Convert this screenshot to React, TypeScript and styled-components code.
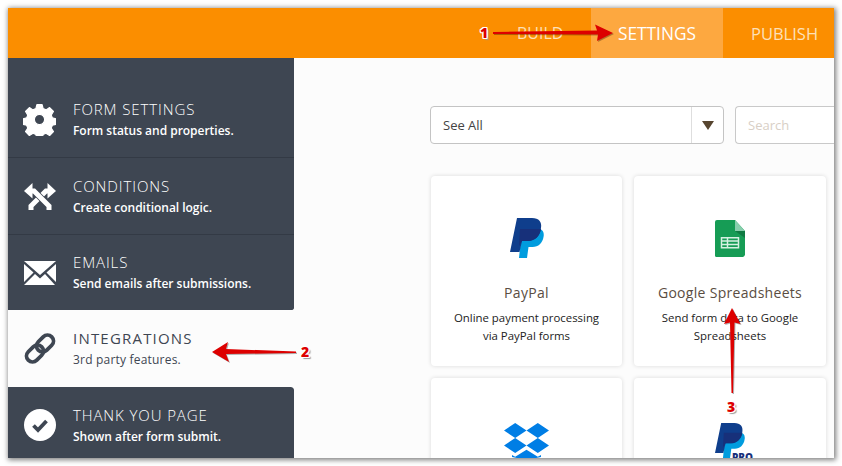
import React from "react";
import styled, { createGlobalStyle } from "styled-components";

const GlobalStyle = createGlobalStyle`
  html, body { margin: 0; padding: 0; background: #fff; }
  body { font-family: "Open Sans", "Liberation Sans", sans-serif; overflow: hidden; }
`;

const menuItems = [
  { key: "settings", title: "FORM SETTINGS", sub: "Form status and properties.", icon: "gear", height: 76 },
  { key: "conditions", title: "CONDITIONS", sub: "Create conditional logic.", icon: "cross", height: 77 },
  { key: "emails", title: "EMAILS", sub: "Send emails after submissions.", icon: "mail", height: 76, rounded: "bottom" },
  { key: "integrations", title: "INTEGRATIONS", sub: "3rd party features.", icon: "link", height: 76, active: true },
  { key: "thanks", title: "THANK YOU PAGE", sub: "Shown after form submit.", icon: "check", height: 77, rounded: "top" },
];

const MenuIcon = ({ name }: { name: string }) => {
  if (name === "gear")
    return (
      <svg width="33" height="33" viewBox="0 0 32 32">
        <path
          fill="#fff"
          stroke="#fff"
          strokeWidth="1.200"
          strokeLinejoin="round"
          fillRule="evenodd"
          d="M13.500 1.500h5l1 4 2.800 1.200 3.500-2.200 3.700 3.700-2.200 3.500 1.200 2.800 4 1v5l-4 1-1.200 2.800 2.200 3.500-3.700 3.700-3.500-2.200-2.800 1.200-1 4h-5l-1-4-2.800-1.200-3.500 2.200-3.700-3.700 2.200-3.500-1.200-2.800-4-1v-5l4-1 1.200-2.800-2.200-3.500 3.700-3.700 3.500 2.200 2.800-1.200zM16 11a5 5 0 1 0 0 10 5 5 0 0 0 0-10z"
        />
      </svg>
    );
  if (name === "cross")
    return (
      <svg width="32" height="27" viewBox="0 0 32 27">
        <path d="M24 8h-2L7 23v4" fill="none" stroke="#fff" strokeWidth="5" />
        <path d="M8 8h2l15 15v4" fill="none" stroke="#3e4652" strokeWidth="6.600" />
        <path d="M8 8h2l15 15v4" fill="none" stroke="#fff" strokeWidth="5" />
        <path fill="#fff" d="M0 8l8.500-8v15.500z M32 8l-8.500-8v15.500z" />
      </svg>
    );
  if (name === "mail")
    return (
      <svg width="32" height="24" viewBox="0 0 32 24">
        <path fill="#fff" d="M0 0h32L16 14z M0 3l9.500 8.500L0 21z M32 3v18l-9.500-9.500z M11 13l5 4.500 5-4.500 10 11H0z" />
      </svg>
    );
  if (name === "link")
    return (
      <svg width="32" height="33" viewBox="0 0 32 33" fill="none" stroke="#3e4652" strokeWidth="3.800">
        <rect x="15" y="2" width="12" height="19" rx="6" transform="rotate(45 21 11.500)" />
        <rect x="5" y="12" width="12" height="19" rx="6" transform="rotate(45 11 21.500)" />
      </svg>
    );
  return (
    <svg width="32" height="32" viewBox="0 0 32 32">
      <circle cx="16" cy="16" r="16" fill="#fff" />
      <path d="M9.500 16.500l4.500 4.500 8.500-9" fill="none" stroke="#3e4652" strokeWidth="3.800" />
    </svg>
  );
};

const PayPalMark = ({ size }: { size: number }) => (
  <svg width={size} height={size * 1.18} viewBox="0 0 34 40">
    <path fill="#009cde" d="M12 11h16c4.500 0 6.500 3 5.500 8-1 6-5 10-11 10h-4l-1.500 11H9z" />
    <path fill="#0f3e8c" d="M7 0h15c7 0 10 4 9 10-1 8-6 13-13 13h-6l-2.500 11H0z" />
    <path fill="#17307a" d="M10 11h21c-1 7-6 12-13 12h-6l-3 5z" />
  </svg>
);

const Sheets = () => (
  <svg width="30" height="37" viewBox="0 0 30 37">
    <path fill="#169c55" d="M2 0h18l10 11v23a3 3 0 0 1-2 3H2a2 2 0 0 1-2-3V2a2 2 0 0 1 2-2z" />
    <path fill="#87ceac" d="M20 0l10 11H20z" />
    <path fill="#0f7a42" d="M20 11h10v7z" />
    <path fill="none" stroke="#d6f0e2" strokeWidth="1.500" d="M6.500 17.700h17v10h-17z M6.500 21h17 M6.500 24.500h17 M12.500 17.700v10" />
  </svg>
);

const Dropbox = () => (
  <svg width="45" height="37" viewBox="0 0 45 37">
    <path
      fill="#007ee5"
      d="M11.200 0l11.300 7.500-11.300 7.500L0 7.500zM33.800 0L45 7.500 33.800 15l-11.300-7.500zM0 22.500L11.200 15l11.300 7.500L11.200 30zM33.800 15L45 22.500 33.800 30l-11.300-7.500zM8 32l3.200 1.800 11.300-7 11.300 7 3.200-1.800v2L22.500 37 8 34z"
    />
  </svg>
);

const ArrowOne = () => (
  <Overlay $left={492} $top={24} $width={122} $height={18}>
    <svg width="122" height="18" viewBox="0 0 122 18">
      <path fill="#dd0000" d="M1 8l104-1.500-2-6L121 9l-16 8 1-6.500L1 10z" />
    </svg>
  </Overlay>
);

const ArrowTwo = () => (
  <Overlay $left={211} $top={341} $width={86} $height={22}>
    <svg width="86" height="22" viewBox="0 0 86 22">
      <path fill="#dd0000" d="M1 11L17 1l-2 7 70 2.500V12l-70 1 3 8z" />
    </svg>
  </Overlay>
);

const ArrowThree = () => (
  <Overlay $left={723} $top={307} $width={18} $height={87}>
    <svg width="18" height="87" viewBox="0 0 18 87">
      <path fill="#dd0000" d="M9 1l8.500 16-6-1.500L10 86H8.500L7 15.500 1 17z" />
    </svg>
  </Overlay>
);

export default function App() {
  return (
    <Page>
      <GlobalStyle />
      <Frame>
        <TopBar>
          <Tab $size={16} $width={74}>BUILD</Tab>
          <Tab $size={17.3} $width={132} $active>SETTINGS</Tab>
          <Tab $size={16.5} $width={111} $inset={28}>PUBLISH</Tab>
        </TopBar>
        <Body>
          <Sidebar>
            <SideGap />
            {menuItems.map((item) => (
              <MenuRow key={item.key} $active={item.active} $height={item.height} $rounded={item.rounded}>
                <IconSlot>
                  <MenuIcon name={item.icon} />
                </IconSlot>
                <div>
                  <MenuTitle $active={item.active}>{item.title}</MenuTitle>
                  <MenuSub $active={item.active}>{item.sub}</MenuSub>
                </div>
              </MenuRow>
            ))}
          </Sidebar>
          <Content>
            <Filters>
              <SelectBox>
                <SelectLabel>See All</SelectLabel>
                <SelectCaret>
                  <Caret />
                </SelectCaret>
              </SelectBox>
              <SearchBox>Search</SearchBox>
            </Filters>
            <Cards>
              <Card>
                <CardLogo>
                  <PayPalMark size={34} />
                </CardLogo>
                <CardTitle>PayPal</CardTitle>
                <CardText>
                  Online payment processing
                  <br />
                  via PayPal forms
                </CardText>
              </Card>
              <Card>
                <CardLogo>
                  <Sheets />
                </CardLogo>
                <CardTitle>Google Spreadsheets</CardTitle>
                <CardText>
                  Send form data to Google
                  <br />
                  Spreadsheets
                </CardText>
              </Card>
              <Card>
                <CardLogoLow>
                  <Dropbox />
                </CardLogoLow>
              </Card>
              <Card>
                <CardLogoLow>
                  <ProMark>
                    <PayPalMark size={30} />
                    <ProTag>PRO</ProTag>
                  </ProMark>
                </CardLogoLow>
              </Card>
            </Cards>
          </Content>
        </Body>
      </Frame>
      <ArrowOne />
      <ArrowTwo />
      <ArrowThree />
      <Num $left={480} $top={24}>1</Num>
      <Num $left={301} $top={343}>2</Num>
      <Num $left={727} $top={398}>3</Num>
    </Page>
  );
}

const Page = styled.div`
  position: relative;
  width: 842px;
  height: 466px;
  background: #fff;
  padding: 8px;
  box-sizing: border-box;
  overflow: hidden;
`;

const Frame = styled.div`
  width: 826px;
  height: 450px;
  display: flex;
  flex-direction: column;
  background: #fcfcfc;
  box-shadow: 1px 1px 5px 1px rgba(0, 0, 0, 0.5);
  overflow: hidden;
`;

const TopBar = styled.div`
  height: 50px;
  flex: none;
  background: #fb8e00;
  display: flex;
  justify-content: flex-end;
`;

const Tab = styled.div<{ $active?: boolean; $size: number; $width: number; $inset?: number }>`
  width: ${(p) => p.$width}px;
  padding-left: ${(p) => p.$inset || 0}px;
  box-sizing: border-box;
  display: flex;
  align-items: center;
  justify-content: ${(p) => (p.$active ? "center" : "flex-start")};
  background: ${(p) => (p.$active ? "#fda840" : "transparent")};
  color: ${(p) => (p.$active ? "#fff" : "#fde0b8")};
  font-size: ${(p) => p.$size}px;
`;

const Body = styled.div`
  flex: 1;
  display: flex;
  min-height: 0;
`;

const Sidebar = styled.div`
  width: 286px;
  flex: none;
  display: flex;
  flex-direction: column;
`;

const SideGap = styled.div`
  height: 24px;
  flex: none;
  background: #3e4652;
`;

const MenuRow = styled.div<{ $active?: boolean; $height: number; $rounded?: string }>`
  height: ${(p) => p.$height}px;
  flex: none;
  box-sizing: border-box;
  display: flex;
  align-items: center;
  padding-left: 15px;
  gap: 17px;
  background: ${(p) => (p.$active ? "#fcfcfc" : "#3e4652")};
  border-bottom: 1px solid ${(p) => (p.$active || p.$rounded ? "transparent" : "#333a45")};
  background-clip: padding-box;
  border-bottom-right-radius: ${(p) => (p.$rounded === "bottom" ? "3px" : "0")};
  border-top-right-radius: ${(p) => (p.$rounded === "top" ? "3px" : "0")};
`;

const IconSlot = styled.div`
  width: 33px;
  display: flex;
  justify-content: center;
`;

const MenuTitle = styled.div<{ $active?: boolean }>`
  font-size: 15px;
  line-height: 20px;
  letter-spacing: ${(p) => (p.$active ? "1.2px" : "0.9px")};
  font-weight: ${(p) => (p.$active ? 400 : 300)};
  color: ${(p) => (p.$active ? "#3e4652" : "#fff")};
`;

const MenuSub = styled.div<{ $active?: boolean }>`
  font-size: 12px;
  line-height: 18px;
  margin-top: 3px;
  letter-spacing: ${(p) => (p.$active ? "0.2px" : "-0.02px")};
  font-weight: ${(p) => (p.$active ? 400 : 600)};
  color: ${(p) => (p.$active ? "#3e4652" : "#fff")};
`;

const Content = styled.div`
  flex: 1;
  padding: 48px 0 0 136px;
  min-width: 0;
`;

const Filters = styled.div`
  display: flex;
  gap: 11px;
  height: 38px;
`;

const SelectBox = styled.div`
  width: 294px;
  flex: none;
  box-sizing: border-box;
  display: flex;
  align-items: stretch;
  background: #fff;
  border: 1px solid #c4c4c4;
  border-radius: 4px;
`;

const SelectLabel = styled.div`
  flex: 1;
  padding-left: 12px;
  display: flex;
  align-items: center;
  font-size: 13px;
  color: #444;
`;

const SelectCaret = styled.div`
  width: 31px;
  border-left: 1px solid #dedede;
  display: flex;
  align-items: center;
  justify-content: center;
`;

const Caret = styled.div`
  width: 0;
  height: 0;
  border-left: 6px solid transparent;
  border-right: 6px solid transparent;
  border-top: 9px solid #57452f;
`;

const SearchBox = styled.div`
  flex: 1;
  box-sizing: border-box;
  padding-left: 12px;
  display: flex;
  align-items: center;
  font-size: 13px;
  color: #d8cfc6;
  background: #fff;
  border: 1px solid #c9c9c9;
  border-right: none;
  border-radius: 4px 0 0 4px;
`;

const Cards = styled.div`
  display: grid;
  grid-template-columns: 191px 192px;
  grid-auto-rows: 190px;
  column-gap: 12px;
  row-gap: 12px;
  margin: 32px 0 0 1px;
`;

const Card = styled.div`
  background: #fff;
  border-radius: 4px;
  box-shadow: 0 0 4px rgba(0, 0, 0, 0.14);
  display: flex;
  flex-direction: column;
  align-items: center;
`;

const CardLogo = styled.div`
  height: 40px;
  margin-top: 42px;
  display: flex;
  align-items: center;
  justify-content: center;
`;

const CardLogoLow = styled.div`
  margin-top: 45px;
  display: flex;
  justify-content: center;
`;

const CardTitle = styled.div`
  margin-top: 25px;
  font-size: 14px;
  line-height: 20px;
  letter-spacing: 0.3px;
  color: #5a4d42;
`;

const CardText = styled.div`
  margin-top: 6px;
  font-size: 11.4px;
  line-height: 18px;
  text-align: center;
  color: #222;
`;

const ProMark = styled.div`
  position: relative;
`;

const ProTag = styled.span`
  position: absolute;
  left: 17px;
  top: 27px;
  font-size: 10px;
  font-weight: 800;
  color: #17307a;
`;

const Overlay = styled.div<{ $left: number; $top: number; $width: number; $height: number }>`
  position: absolute;
  left: ${(p) => p.$left}px;
  top: ${(p) => p.$top}px;
  width: ${(p) => p.$width}px;
  height: ${(p) => p.$height}px;
  line-height: 0;
  filter: drop-shadow(1px 1px 0.5px rgba(0, 0, 0, 0.3));
`;

const Num = styled.div<{ $left: number; $top: number }>`
  position: absolute;
  left: ${(p) => p.$left}px;
  top: ${(p) => p.$top}px;
  font-size: 14px;
  line-height: 18px;
  font-weight: 800;
  color: #dd0000;
  text-shadow: 1px 0 0 #fff, -1px 0 0 #fff, 0 1px 0 #fff, 0 -1px 0 #fff, 1px 1px 0 #fff, -1px -1px 0 #fff, 1px -1px 0 #fff, -1px 1px 0 #fff, 2px 2px 1px #999;
`;
